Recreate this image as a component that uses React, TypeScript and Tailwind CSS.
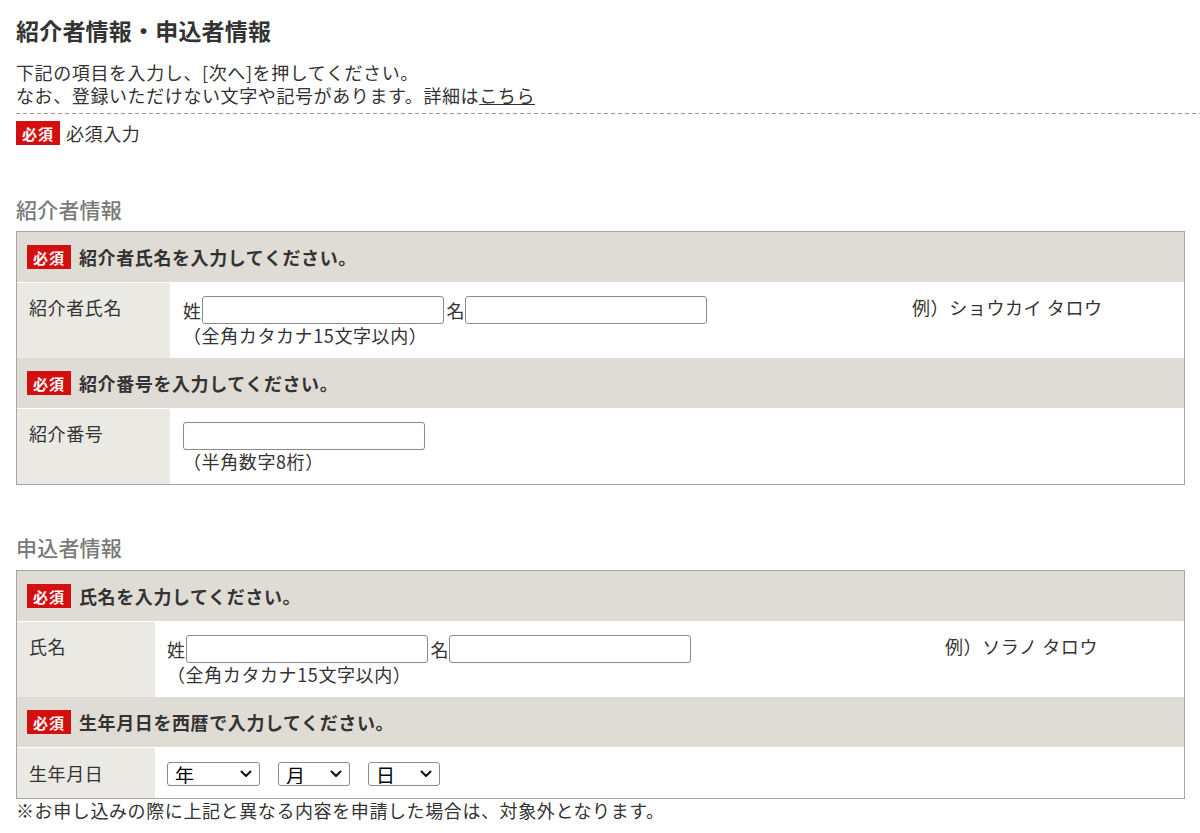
const Badge = () => (
  <span className="inline-flex h-[24px] w-[44px] shrink-0 items-center justify-center bg-[#d40f0f] text-[15px] font-bold leading-none tracking-[1px] text-white">
    必須
  </span>
)

const HeadRow = ({ label }: { label: string }) => (
  <div className="flex h-[50px] items-center gap-2 bg-[#dfdcd5] pl-[10px]">
    <Badge />
    <span className="font-bold">{label}</span>
  </div>
)

const TextBox = () => (
  <input
    type="text"
    className="h-[28px] w-[242px] rounded-[3px] border border-[#8a8a8a] bg-white px-1"
  />
)

const Pick = ({ label, w }: { label: string; w: string }) => (
  <div className={`relative ${w} h-[24px]`}>
    <select className="h-full w-full appearance-none rounded-[3px] border border-[#8a8a8a] bg-white pl-[7px] text-[19px] leading-none text-black">
      <option>{label}</option>
    </select>
    <svg
      viewBox="0 0 12 8"
      className="pointer-events-none absolute right-[8px] top-[8px] h-[8px] w-[12px]"
      fill="none"
      stroke="#111"
      strokeWidth="2"
      strokeLinecap="round"
      strokeLinejoin="round"
    >
      <path d="M1.5 1.5 6 6l4.5-4.5" />
    </svg>
  </div>
)

export default function App() {
  return (
    <div className="min-h-screen bg-white font-['Noto_Sans_CJK_JP',sans-serif] text-[18px] leading-[22px] tracking-[0.6px] text-[#333]">
      <div className="pt-[15px]">
        <h1 className="pl-4 text-[23px] font-bold leading-[30px] tracking-[0.2px] text-[#333]">紹介者情報・申込者情報</h1>

        <div className="mt-[16px] pl-4 leading-[23px]">
          <p>下記の項目を入力し、[次へ]を押してください。</p>
          <p>
            なお、登録いただけない文字や記号があります。詳細は<a href="#" className="underline">こちら</a>
          </p>
        </div>

        {/* dashed divider */}
        <div className="ml-4 mt-[6px] h-px bg-[linear-gradient(to_right,#9a9a9a_4px,transparent_4px)] bg-[length:7px_1px]" />

        <div className="mt-[7px] flex items-center gap-[6px] pl-4">
          <Badge />
          <span>必須入力</span>
        </div>

        <div className="pl-4 pr-[15px]">
          {/* referrer */}
          <h2 className="mt-[49px] text-[21px] font-medium leading-[30px] tracking-[0.2px] text-[#7a7a7a]">紹介者情報</h2>
          <div className="mt-[7px] border border-[#a5a5a5]">
            <HeadRow label="紹介者氏名を入力してください。" />
            <div className="grid grid-cols-[153px_1fr] border-t border-white">
              <div className="bg-[#ebe9e3] pl-[12px] pt-[13px]">紹介者氏名</div>
              <div className="flex bg-white pb-[12px] pl-[13px] pt-[13px]">
                <div className="w-[729px]">
                  <div className="flex items-center">
                    <span>姓</span>
                    <TextBox />
                    <span className="ml-[3px]">名</span>
                    <TextBox />
                  </div>
                  <p>（全角カタカナ15文字以内）</p>
                </div>
                <p>例）ショウカイ タロウ</p>
              </div>
            </div>
            <HeadRow label="紹介番号を入力してください。" />
            <div className="grid grid-cols-[153px_1fr] border-t border-white">
              <div className="bg-[#ebe9e3] pl-[12px] pt-[13px]">紹介番号</div>
              <div className="bg-white pb-[12px] pl-[13px] pt-[13px]">
                <TextBox />
                <p>（半角数字8桁）</p>
              </div>
            </div>
          </div>

          {/* applicant */}
          <h2 className="mt-[47px] text-[21px] font-medium leading-[30px] tracking-[0.2px] text-[#7a7a7a]">申込者情報</h2>
          <div className="mt-[8px] border border-[#a5a5a5]">
            <HeadRow label="氏名を入力してください。" />
            <div className="grid grid-cols-[138px_1fr] border-t border-white">
              <div className="bg-[#ebe9e3] pl-[12px] pt-[13px]">氏名</div>
              <div className="flex bg-white pb-[12px] pl-[12px] pt-[13px]">
                <div className="w-[778px]">
                  <div className="flex items-center">
                    <span>姓</span>
                    <TextBox />
                    <span className="ml-[3px]">名</span>
                    <TextBox />
                  </div>
                  <p>（全角カタカナ15文字以内）</p>
                </div>
                <p>例）ソラノ タロウ</p>
              </div>
            </div>
            <HeadRow label="生年月日を西暦で入力してください。" />
            <div className="grid grid-cols-[138px_1fr] border-t border-white">
              <div className="flex items-center bg-[#ebe9e3] pl-[12px]">生年月日</div>
              <div className="flex gap-[18px] bg-white pb-[12px] pl-[12px] pt-[14px]">
                <Pick label="年" w="w-[93px]" />
                <Pick label="月" w="w-[72px]" />
                <Pick label="日" w="w-[72px]" />
              </div>
            </div>
          </div>
          <p>※お申し込みの際に上記と異なる内容を申請した場合は、対象外となります。</p>
        </div>
      </div>
    </div>
  )
}
